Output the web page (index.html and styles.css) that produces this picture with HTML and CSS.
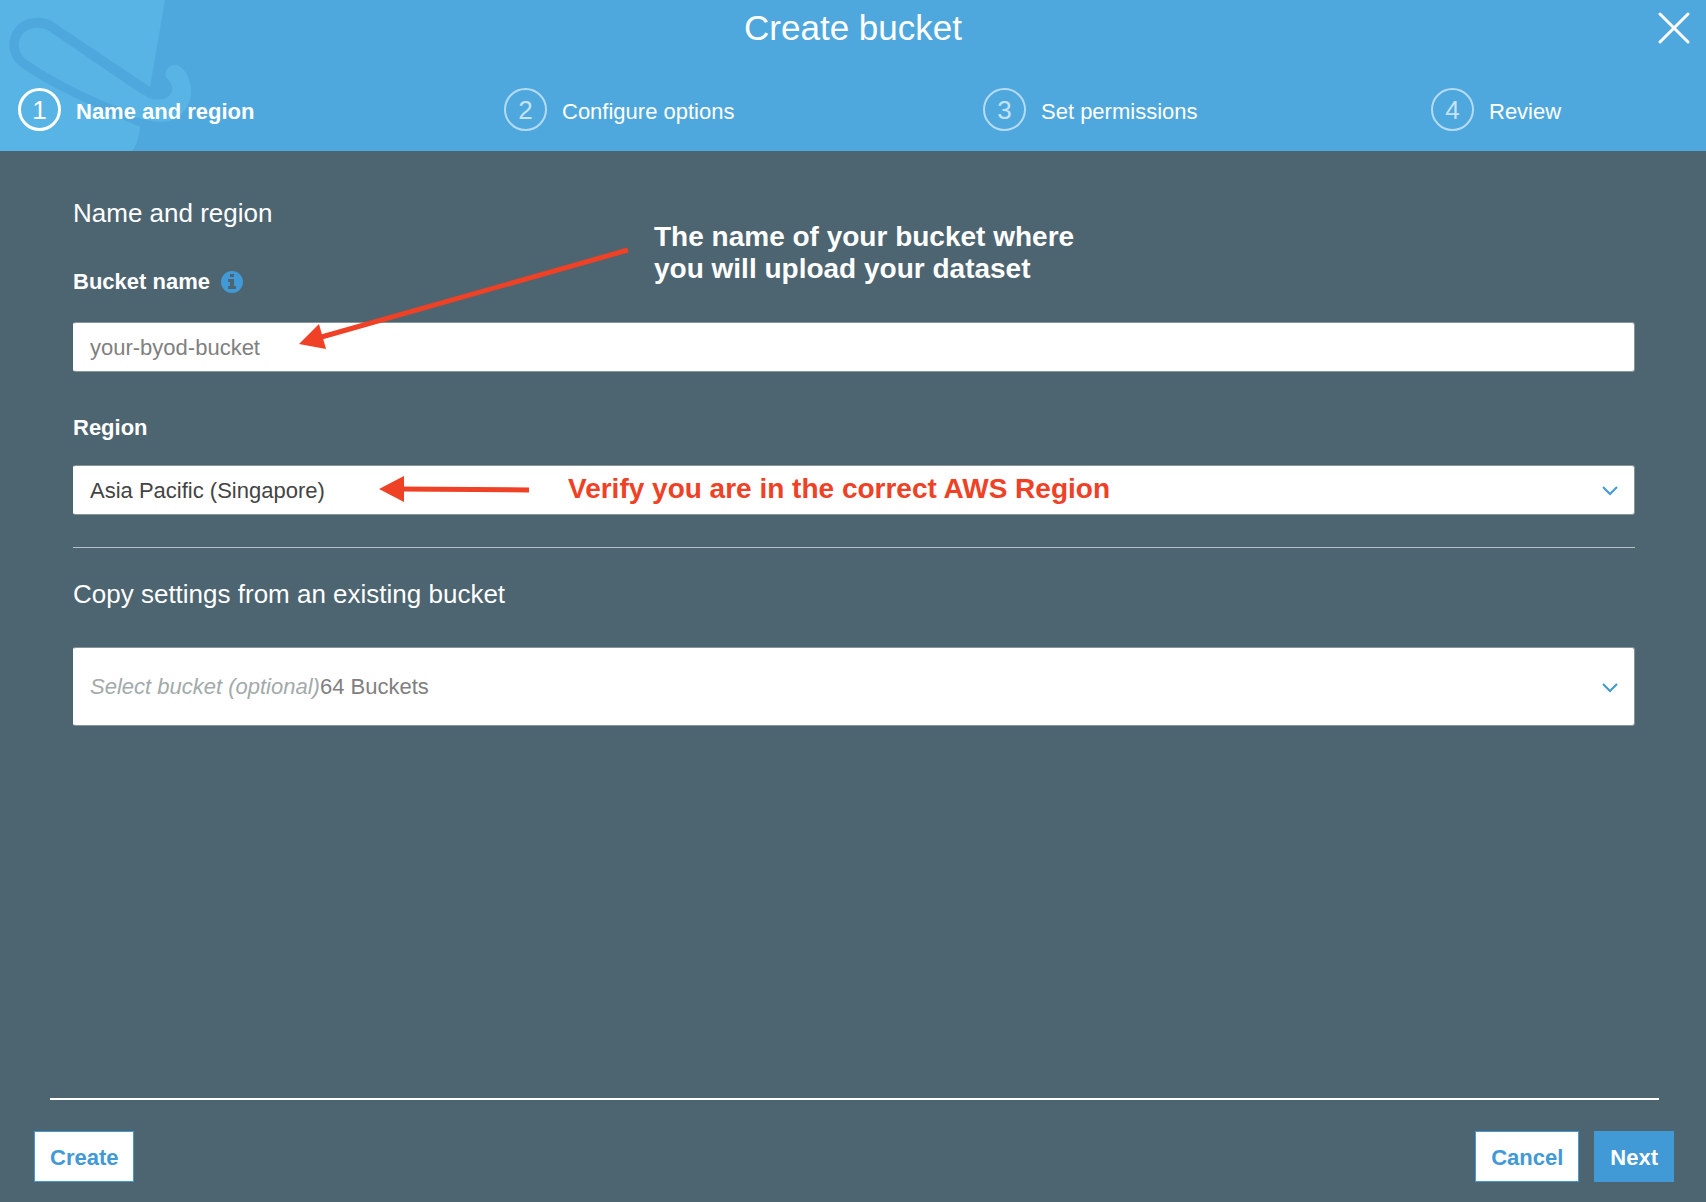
FILE: index.html
```html
<!DOCTYPE html>
<html lang="en">
<head>
<meta charset="utf-8">
<meta name="viewport" content="width=device-width, initial-scale=1">
<title>Create bucket</title>
<link rel="stylesheet" href="styles.css">
</head>
<body>
<div class="wizard">
  <header class="wizard-header">
    <svg class="header-art" width="200" height="151" viewBox="0 0 200 151" aria-hidden="true">
      <path class="art-light" d="M0 0H165L150 87L147 96L150 119L140 127Q138 145 132 151H0Z"/>
      <path class="art-dark" fill-rule="evenodd" d="M150 87L56 24C45 15 27 16 17 26C6 37 7 57 20 66C45 85 95 108 141 127L150 119C105 104 55 80 27 60C16 52 17 38 25 32C32 26 42 27 49 31L140 93L152 99L168 60Z"/>
      <path class="art-light" d="M138 92C149 101 161 101 168 97C174 92 174 85 166 77C164 70 169 65 175 65C186 66 192 83 191 93C190 110 177 122 162 122C150 122 135 117 125 114Z"/>
    </svg>
    <div class="title-bar">
      <h1 class="title">Create bucket</h1>
      <button class="close" type="button" aria-label="Close">
        <svg width="32" height="32" viewBox="0 0 32 32" aria-hidden="true"><path d="M2 2L30 30M30 2L2 30" fill="none" stroke="#fff" stroke-width="3" stroke-linecap="round"/></svg>
      </button>
    </div>
    <ol class="steps">
      <li class="step step-active" aria-current="step"><span class="step-number">1</span><span class="step-label">Name and region</span></li>
      <li class="step"><span class="step-number">2</span><span class="step-label">Configure options</span></li>
      <li class="step"><span class="step-number">3</span><span class="step-label">Set permissions</span></li>
      <li class="step"><span class="step-number">4</span><span class="step-label">Review</span></li>
    </ol>
  </header>

  <main class="content">
    <h2 class="section-title">Name and region</h2>
    <div class="field field-name">
      <div class="label-row">
        <label for="bucket-name">Bucket name</label>
        <svg width="22" height="22" viewBox="0 0 22 22" role="img" aria-label="Info"><circle cx="11" cy="11" r="11" fill="#4199d6"/><path d="M9 3h4v3H9zM7 8h6v7h2v3H7v-3h2v-4H7z" fill="#4d6471"/></svg>
      </div>
      <input class="control" id="bucket-name" type="text" placeholder="your-byod-bucket">
    </div>
    <div class="field field-region">
      <label for="region">Region</label>
      <div class="select">
        <select class="control" id="region"><option>Asia Pacific (Singapore)</option></select>
        <svg class="chevron" width="18" height="12" viewBox="0 0 18 12" aria-hidden="true"><path d="M2 3L9 10L16 3"/></svg>
      </div>
    </div>
    <hr class="divider">
    <h2 class="section-title"><label for="copy-from">Copy settings from an existing bucket</label></h2>
    <div class="select select-copy">
      <select class="control control-tall" id="copy-from"></select>
      <span class="select-text"><em>Select bucket (optional)</em>64 Buckets</span>
      <svg class="chevron" width="18" height="12" viewBox="0 0 18 12" aria-hidden="true"><path d="M2 3L9 10L16 3"/></svg>
    </div>

    <svg class="arrows" width="640" height="380" viewBox="0 0 640 380" aria-hidden="true">
      <path d="M628 99L318 187" stroke="#ee4126" stroke-width="5"/>
      <path d="M299 193L319 173L326 198Z" fill="#ee4126"/>
      <path d="M529 339L400 338" stroke="#ee4126" stroke-width="5"/>
      <path d="M379 338L404 325V351Z" fill="#ee4126"/>
    </svg>
    <p class="note note-name">The name of your bucket where<br>you will upload your dataset</p>
    <p class="note note-region">Verify you are in the correct AWS Region</p>
  </main>

  <footer class="wizard-footer">
    <hr class="footer-rule">
    <div class="actions">
      <button class="button" type="button">Create</button>
      <div class="actions-end">
        <button class="button" type="button">Cancel</button>
        <button class="button button-primary" type="button">Next</button>
      </div>
    </div>
  </footer>
</div>
</body>
</html>
```

FILE: styles.css
```css
* {
  box-sizing: border-box;
}

body,
h1,
h2,
p,
ol,
hr {
  margin: 0;
}

body,
button,
input,
select {
  font-family: "Liberation Sans", Arial, sans-serif;
  font-size: 22px;
  line-height: 26px;
}

.wizard {
  display: flex;
  flex-direction: column;
  min-height: 100vh;
  background: #4d6471;
  color: #fff;
}

/* Header */
.wizard-header {
  position: relative;
  background: #4fa8dd;
  padding-bottom: 20px;
}

.header-art {
  position: absolute;
  left: 0;
  top: 0;
}

.art-light {
  fill: #58b4e4;
}

.art-dark {
  fill: #4fa8dd;
}

.title-bar {
  position: relative;
  display: grid;
  grid-template-columns: 1fr auto 1fr;
  align-items: center;
  height: 56px;
  padding: 0 16px;
}

.title {
  grid-column: 2;
  font-size: 35px;
  font-weight: 400;
  line-height: 40px;
}

.close {
  justify-self: end;
  display: flex;
  padding: 0;
  border: 0;
  background: none;
}

.steps {
  position: relative;
  display: grid;
  grid-template-columns: 486fr 479fr 448fr 275fr;
  margin-top: 32px;
  padding: 0 0 0 18px;
  list-style: none;
}

.step {
  display: flex;
  align-items: center;
  gap: 15px;
}

.step-number {
  width: 43px;
  height: 43px;
  border: 2px solid #b5dbf2;
  border-radius: 50%;
  color: #c5e3f5;
  font-size: 26px;
  line-height: 41px;
  text-align: center;
}

.step-label {
  padding-top: 4px;
}

.step-active .step-number {
  border: 3px solid #fff;
  color: #fff;
  line-height: 39px;
}

.step-active .step-label {
  font-weight: 700;
}

/* Form */
.content {
  position: relative;
  flex: 1;
  padding: 47px 71px 40px 73px;
}

.section-title {
  font-size: 26px;
  font-weight: 400;
  line-height: 30px;
}

.field {
  display: flex;
  flex-direction: column;
  font-weight: 700;
}

.field-name {
  gap: 27px;
  margin-top: 41px;
}

.field-region {
  gap: 24px;
  margin-top: 43px;
}

.label-row {
  display: flex;
  align-items: center;
  gap: 11px;
}

.control {
  width: 100%;
  height: 50px;
  padding: 2px 16px 0;
  border: 1px solid #879596;
  border-left-color: #fff;
  border-radius: 3px;
  background: #fff;
  color: #444;
  appearance: none;
}

.control::placeholder {
  color: #808080;
  opacity: 1;
}

.control-tall {
  height: 79px;
}

.select {
  display: grid;
  align-items: center;
}

.select > * {
  grid-area: 1 / 1;
}

.select-text {
  padding-left: 17px;
  color: #808080;
  pointer-events: none;
}

.select-text em {
  color: #a2aaaa;
}

.chevron {
  justify-self: end;
  margin-right: 16px;
  fill: none;
  stroke: #4199d6;
  stroke-width: 2;
  pointer-events: none;
}

.divider {
  height: 1px;
  margin: 32px 0 31px;
  border: 0;
  background: #b4c0c4;
}

.select-copy {
  margin-top: 38px;
}

/* Callouts drawn over the form */
.arrows,
.note {
  position: absolute;
  pointer-events: none;
}

.arrows {
  left: 0;
  top: 0;
}

.note {
  font-size: 28px;
  font-weight: 700;
  line-height: 32px;
}

.note-name {
  left: 654px;
  top: 70px;
}

.note-region {
  left: 568px;
  top: 322px;
  color: #ee4126;
}

/* Footer */
.footer-rule {
  height: 2px;
  margin: 0 47px 0 50px;
  border: 0;
  background: #fff;
}

.actions {
  display: flex;
  justify-content: space-between;
  padding: 31px 32px 20px 34px;
}

.actions-end {
  display: flex;
  gap: 15px;
}

.button {
  height: 51px;
  padding: 2px 15px 0;
  border: 1px solid #4199d6;
  background: #fff;
  color: #4199d6;
  font-weight: 700;
}

.button-primary {
  background: #4199d6;
  color: #fff;
}
```
